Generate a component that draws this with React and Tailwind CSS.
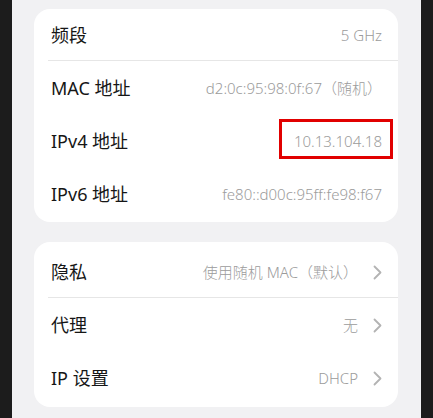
const font = { fontFamily: '"Noto Sans", "Noto Sans CJK SC", sans-serif' }

function Chevron() {
  return (
    <svg width="9" height="15" viewBox="0 0 9 15" className="shrink-0">
      <path d="M1.5 1.5 L7.5 7.5 L1.5 13.5" fill="none" stroke="#b3b3b3" strokeWidth="1.8" strokeLinecap="round" strokeLinejoin="round" />
    </svg>
  )
}

function Row({ label, value, arrow, divider, highlight }) {
  return (
    <div className="relative h-[53px]">
      <div className="flex h-full items-center justify-between pl-[17px] pr-[16px]">
        <span className="text-[18px] text-[#161616]">{label}</span>
        <div className="flex items-center gap-[15px]">
          <span className="text-[15px] font-light text-[#9b9b9b]">{value}</span>
          {arrow && <Chevron />}
        </div>
      </div>
      {divider && <div className="absolute bottom-[1px] left-[14px] right-0 h-px bg-[#e6e6e6]" />}
      {highlight && (
        <div className="absolute right-[5px] top-[4px] h-[40px] w-[114px] border-[3px] border-[#e10000]" />
      )}
    </div>
  )
}

export default function App() {
  return (
    <div className="h-[418px] bg-[#1c1c1c] px-[12px]" style={font}>
      <div className="h-full bg-[#f1f1f3] pl-[22px] pr-[23px] pt-[9px]">
        <div className="rounded-[16px] bg-white pb-px">
          <Row label="频段" value="5 GHz" divider />
          <Row label="MAC 地址" value="d2:0c:95:98:0f:67（随机）" />
          <Row label="IPv4 地址" value="10.13.104.18" highlight />
          <Row label="IPv6 地址" value="fe80::d00c:95ff:fe98:f67" />
        </div>
        <div className="mt-[20px] rounded-[16px] bg-white pb-[2px] pt-[4px]">
          <Row label="隐私" value="使用随机 MAC（默认）" arrow divider />
          <Row label="代理" value="无" arrow />
          <Row label="IP 设置" value="DHCP" arrow />
        </div>
      </div>
    </div>
  )
}
